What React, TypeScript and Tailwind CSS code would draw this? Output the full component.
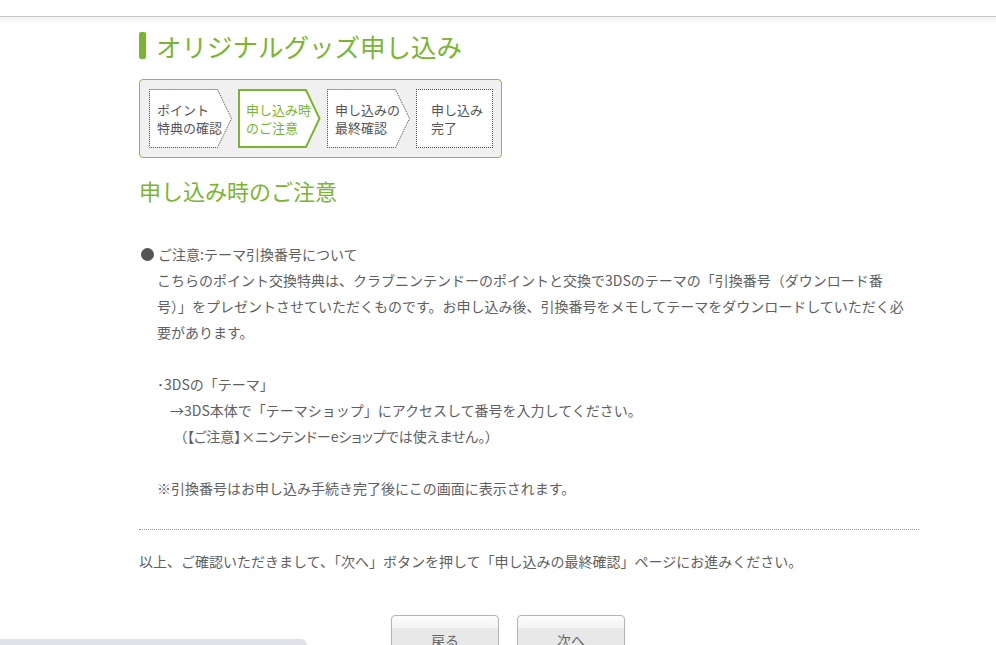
import React from 'react';

const GREEN = '#7ab52f';

type Step = { lines: [string, string]; active?: boolean; last?: boolean };

const STEPS: Step[] = [
  { lines: ['ポイント', '特典の確認'] },
  { lines: ['申し込み時', 'のご注意'], active: true },
  { lines: ['申し込みの', '最終確認'] },
  { lines: ['申し込み', '完了'], last: true },
];

function StepItem({ step }: { step: Step }) {
  if (step.last) {
    return (
      <div className="flex h-[59px] w-[77px] flex-col justify-center border border-dotted border-[#444] bg-white pl-[14px] text-[13px] leading-[18px] text-[#555]">
        <span>{step.lines[0]}</span>
        <span>{step.lines[1]}</span>
      </div>
    );
  }
  return (
    <div className="relative h-[59px] w-[83px]">
      <svg className="absolute inset-0" width="83" height="59" viewBox="0 0 83 59">
        {step.active ? (
          <path d="M1 1 H68 L81.5 29.5 L68 58 H1 Z" fill="#fff" stroke={GREEN} strokeWidth="2" />
        ) : (
          <path
            d="M0.5 0.5 H68.5 L82.5 29.5 L68.5 58.5 H0.5 Z"
            fill="#fff"
            stroke="#444"
            strokeWidth="1"
            strokeDasharray="1 1"
          />
        )}
      </svg>
      <div
        className={`relative flex h-full flex-col justify-center pl-[8px] text-[13px] leading-[18px] ${
          step.active ? 'text-[#7ab52f]' : 'text-[#555]'
        }`}
      >
        <span>{step.lines[0]}</span>
        <span>{step.lines[1]}</span>
      </div>
    </div>
  );
}

export default function App() {
  return (
    <div className="relative min-h-screen bg-white font-['Noto_Sans_CJK_JP','Noto_Sans',sans-serif] text-[#606060]">
      {/* header rule */}
      <div className="h-[16px] bg-white" />
      <div className="h-px bg-[#c8c8c8]" />
      <div className="h-[8px] bg-gradient-to-b from-[#f1f1f1] to-white" />

      <div className="ml-[139px] w-[780px]">
        {/* page title */}
        <div className="mt-[7px] flex h-[27px] items-center">
          <span className="h-[27px] w-[7px] rounded-[2px] bg-[#7ab52f]" />
          <h1 className="ml-[10px] text-[25.5px] leading-[27px] text-[#7ab52f]">オリジナルグッズ申し込み</h1>
        </div>

        {/* steps */}
        <div className="mt-[20px] flex w-[363px] gap-[6px] rounded-[4px] border border-[#86bc42] bg-[#f0f0f0] py-[9px] pl-[9px] pr-[8px]">
          {STEPS.map((s, i) => (
            <StepItem key={i} step={s} />
          ))}
        </div>

        <h2 className="mt-[18px] text-[22px] leading-[28px] text-[#7ab52f]">申し込み時のご注意</h2>

        {/* notes */}
        <div className="mt-[37px] whitespace-nowrap text-[14px] leading-[26px]">
          <div className="flex items-center">
            <span className="ml-[2px] mr-[4px] h-[13px] w-[13px] rounded-full bg-[#555]" />
            <span>ご注意:テーマ引換番号について</span>
          </div>
          <div className="pl-[18px]">
            <div>こちらのポイント交換特典は、クラブニンテンドーのポイントと交換で3DSのテーマの「引換番号（ダウンロード番</div>
            <div>号）」をプレゼントさせていただくものです。お申し込み後、引換番号をメモしてテーマをダウンロードしていただく必</div>
            <div>要があります。</div>
            <div>&nbsp;</div>
            <div>･3DSの「テーマ」</div>
            <div className="pl-[13px]">→3DS本体で「テーマショップ」にアクセスして番号を入力してください。</div>
            <div className="pl-[23px] [font-feature-settings:'palt']">（【ご注意】×ニンテンドーeショップでは使えません。）</div>
            <div>&nbsp;</div>
            <div>※引換番号はお申し込み手続き完了後にこの画面に表示されます。</div>
          </div>
        </div>

        <div className="mt-[28px] border-t border-dotted border-[#7ab52f]" />

        <p className="mt-[18px] whitespace-nowrap text-[14px] leading-[26px]">
          以上、ご確認いただきまして、「次へ」ボタンを押して「申し込みの最終確認」ページにお進みください。
        </p>

        {/* buttons */}
        <div className="mt-[41px] flex gap-[18px] pl-[252px]">
          <button className="h-[50px] w-[108px] rounded-[4px] border border-[#b4b4b4] bg-[linear-gradient(to_bottom,#fdfdfd_0px,#f3f3f3_12px,#e8e8e8_12px,#e8e8e8_100%)] text-[14px] text-[#666]">
            戻る
          </button>
          <button className="h-[50px] w-[108px] rounded-[4px] border border-[#b4b4b4] bg-[linear-gradient(to_bottom,#fdfdfd_0px,#f3f3f3_12px,#e8e8e8_12px,#e8e8e8_100%)] text-[14px] text-[#666]">
            次へ
          </button>
        </div>
      </div>

      {/* browser overlay bar */}
      <div className="fixed bottom-0 left-0 h-[6px] w-[307px] rounded-tr-[6px] bg-[#dee1e6]" />
    </div>
  );
}
